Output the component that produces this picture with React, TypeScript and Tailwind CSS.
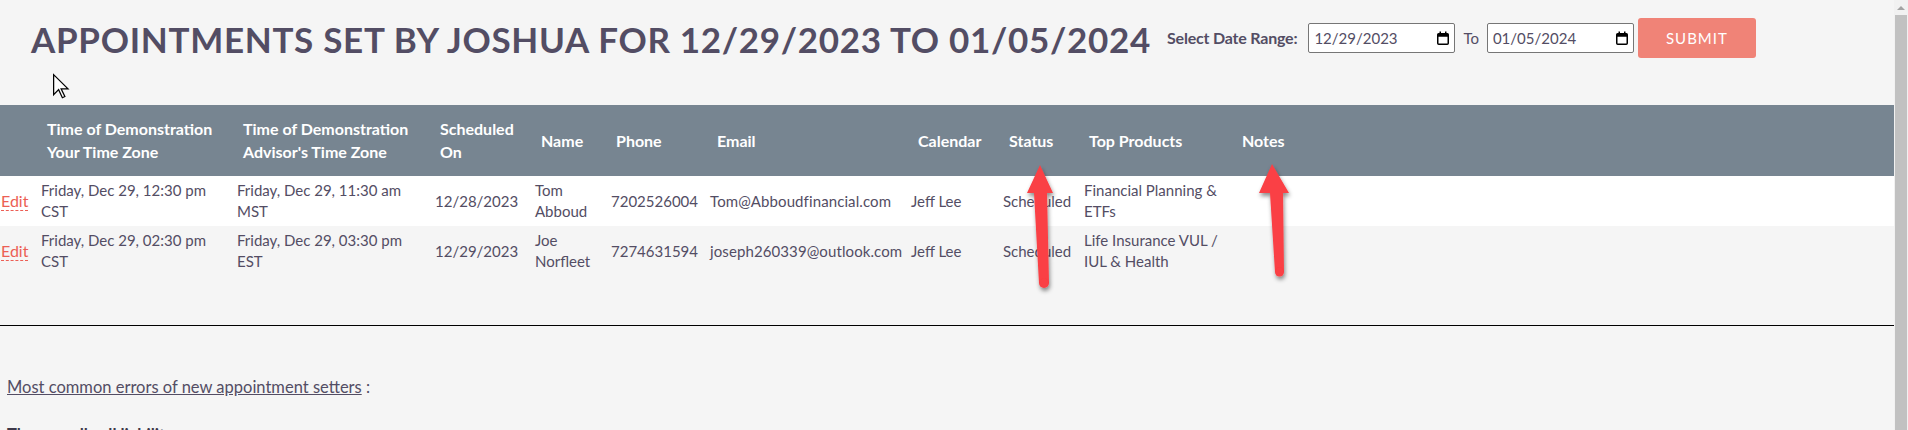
import React from "react";

const rows = [
  {
    yours: "Friday, Dec 29, 12:30 pm CST",
    advisor: "Friday, Dec 29, 11:30 am MST",
    scheduled: "12/28/2023",
    name: "Tom Abboud",
    phone: "7202526004",
    email: "Tom@Abboudfinancial.com",
    calendar: "Jeff Lee",
    status: "Scheduled",
    products: "Financial Planning & ETFs",
  },
  {
    yours: "Friday, Dec 29, 02:30 pm CST",
    advisor: "Friday, Dec 29, 03:30 pm EST",
    scheduled: "12/29/2023",
    name: "Joe Norfleet",
    phone: "7274631594",
    email: "joseph260339@outlook.com",
    calendar: "Jeff Lee",
    status: "Scheduled",
    products: "Life Insurance VUL / IUL & Health",
  },
];

function CalendarIcon() {
  return (
    <svg width="12" height="14" viewBox="0 0 12 14" className="shrink-0">
      <rect x="0.75" y="2.75" width="10.5" height="10.5" rx="1" fill="none" stroke="#000" strokeWidth="1.5" />
      <rect x="0.75" y="2.75" width="10.5" height="3" fill="#000" />
      <rect x="2.5" y="0.5" width="1.5" height="3" fill="#000" />
      <rect x="8" y="0.5" width="1.5" height="3" fill="#000" />
    </svg>
  );
}

function DateBox({ value }: { value: string }) {
  return (
    <div className="w-[147px] h-[30px] bg-white border border-[#767676] rounded-[2px] flex items-center justify-between pl-[5px] pr-[5px] text-[15px] text-[#534d64]">
      <span>{value}</span>
      <CalendarIcon />
    </div>
  );
}

export default function App() {
  return (
    <div className="flex h-[430px] w-[1908px] overflow-hidden bg-[#f5f5f5] font-['Lato','Noto_Sans',sans-serif] text-[#534d64]">
      <div className="relative w-[1894px] shrink-0">
        {/* Page header */}
        <div className="flex items-start h-[105px] pt-[18px] pl-[31px]">
          <h1 className="text-[35px] leading-[42px] font-bold tracking-[0.7px] text-[#534d64] whitespace-nowrap">
            APPOINTMENTS SET BY JOSHUA FOR 12/29/2023 TO 01/05/2024
          </h1>
          <div className="flex items-center h-[40px] ml-[16px]">
            <span className="text-[16px] font-bold mr-[11px] tracking-[-0.2px]">Select Date Range:</span>
            <DateBox value="12/29/2023" />
            <span className="text-[15px] ml-[8px] mr-[8px]">To</span>
            <DateBox value="01/05/2024" />
            <button className="ml-[4px] w-[118px] h-[40px] rounded-[3px] bg-[#f08377] text-white text-[15px] tracking-[1px]">
              SUBMIT
            </button>
          </div>
        </div>

        {/* Appointments table */}
        <table className="table-fixed w-full border-collapse text-[15px] leading-[21px]">
          <colgroup>
            <col className="w-[36px]" />
            <col className="w-[196px]" />
            <col className="w-[198px]" />
            <col className="w-[100px]" />
            <col className="w-[76px]" />
            <col className="w-[99px]" />
            <col className="w-[201px]" />
            <col className="w-[92px]" />
            <col className="w-[81px]" />
            <col className="w-[158px]" />
            <col />
          </colgroup>
          <thead>
            <tr className="bg-[#778591] text-white text-[16px] text-left leading-[23px] h-[71px]">
              <th></th>
              <th className="pl-[11px] pb-[1px] font-bold">Time of Demonstration<br />Your Time Zone</th>
              <th className="pl-[11px] pb-[1px] font-bold">Time of Demonstration<br />Advisor's Time Zone</th>
              <th className="pl-[10px] pb-[1px] font-bold">Scheduled<br />On</th>
              <th className="pl-[11px] pb-[1px] font-bold">Name</th>
              <th className="pl-[10px] pb-[1px] font-bold">Phone</th>
              <th className="pl-[12px] pb-[1px] font-bold">Email</th>
              <th className="pl-[12px] pb-[1px] font-bold">Calendar</th>
              <th className="pl-[11px] pb-[1px] font-bold">Status</th>
              <th className="pl-[10px] pb-[1px] font-bold">Top Products</th>
              <th className="pl-[5px] pb-[1px] font-bold">Notes</th>
            </tr>
          </thead>
          <tbody>
            {rows.map((r, i) => (
              <tr key={i} className={i === 0 ? "bg-white" : "bg-[#f5f5f5]"}>
                <td className="pl-[1px] py-[4px] align-middle">
                  <a className="text-[16px] text-[#ec5f55] border-b border-dashed border-[#ec5f55] leading-[19px] inline-block">Edit</a>
                </td>
                <td className="pl-[5px] pr-[4px] py-[4px] align-middle">{r.yours}</td>
                <td className="pl-[5px] pr-[4px] py-[4px] align-middle">{r.advisor}</td>
                <td className="pl-[5px] py-[4px] align-middle">{r.scheduled}</td>
                <td className="pl-[5px] pr-[2px] py-[4px] align-middle">{r.name}</td>
                <td className="pl-[5px] py-[4px] align-middle">{r.phone}</td>
                <td className="pl-[5px] py-[4px] align-middle whitespace-nowrap tracking-[0.1px]">{r.email}</td>
                <td className="pl-[5px] py-[4px] align-middle">{r.calendar}</td>
                <td className="pl-[5px] py-[4px] align-middle">{r.status}</td>
                <td className="pl-[5px] pr-[10px] py-[4px] align-middle">{r.products}</td>
                <td></td>
              </tr>
            ))}
          </tbody>
        </table>

        <div className="mt-[49px] border-t-[1.5px] border-black"></div>

        <div className="pl-[7px] pt-[51px] text-[16.5px] leading-[21px]">
          <p>
            <span className="underline">Most common errors of new appointment setters</span> :
          </p>
          <p className="mt-[27px] font-bold text-[#3d3849]">The overall call liability</p>
        </div>

        {/* Annotations */}
        <svg className="absolute left-0 top-0 pointer-events-none" width="1894" height="430">
          <defs>
            <filter id="sh" x="-50%" y="-20%" width="200%" height="150%">
              <feDropShadow dx="1" dy="3" stdDeviation="2" floodColor="#000" floodOpacity="0.45" />
            </filter>
          </defs>
          <g filter="url(#sh)" fill="#fa3f44">
            <polygon points="1040,165 1053,193 1047,193 1049,283 1039,283 1034,193 1027,193" />
            <circle cx="1044" cy="283" r="5" />
            <polygon points="1272,164 1289,193 1283,193 1284,272 1275,272 1270,193 1259,193" />
            <circle cx="1279.5" cy="272" r="4.5" />
          </g>
          {/* mouse pointer */}
          <g transform="translate(53,74) scale(1.25)">
            <path
              d="M0.5 0.5 L0.5 16.5 L4.5 12.5 L7.5 19 L9.5 18 L6.5 11.8 L12 11.8 Z"
              fill="#fff"
              stroke="#000"
              strokeWidth="1"
              strokeLinejoin="miter"
            />
          </g>
        </svg>
      </div>

      {/* Scrollbar */}
      <div className="w-[14px] h-full bg-[#f1f1f1] flex flex-col">
        <div className="h-[15px] flex items-center justify-center">
          <div className="w-0 h-0 border-l-[4px] border-r-[4px] border-b-[4px] border-l-transparent border-r-transparent border-b-[#a3a3a3]"></div>
        </div>
        <div className="flex-1 mx-[1px] bg-[#c1c1c1]"></div>
      </div>
    </div>
  );
}
